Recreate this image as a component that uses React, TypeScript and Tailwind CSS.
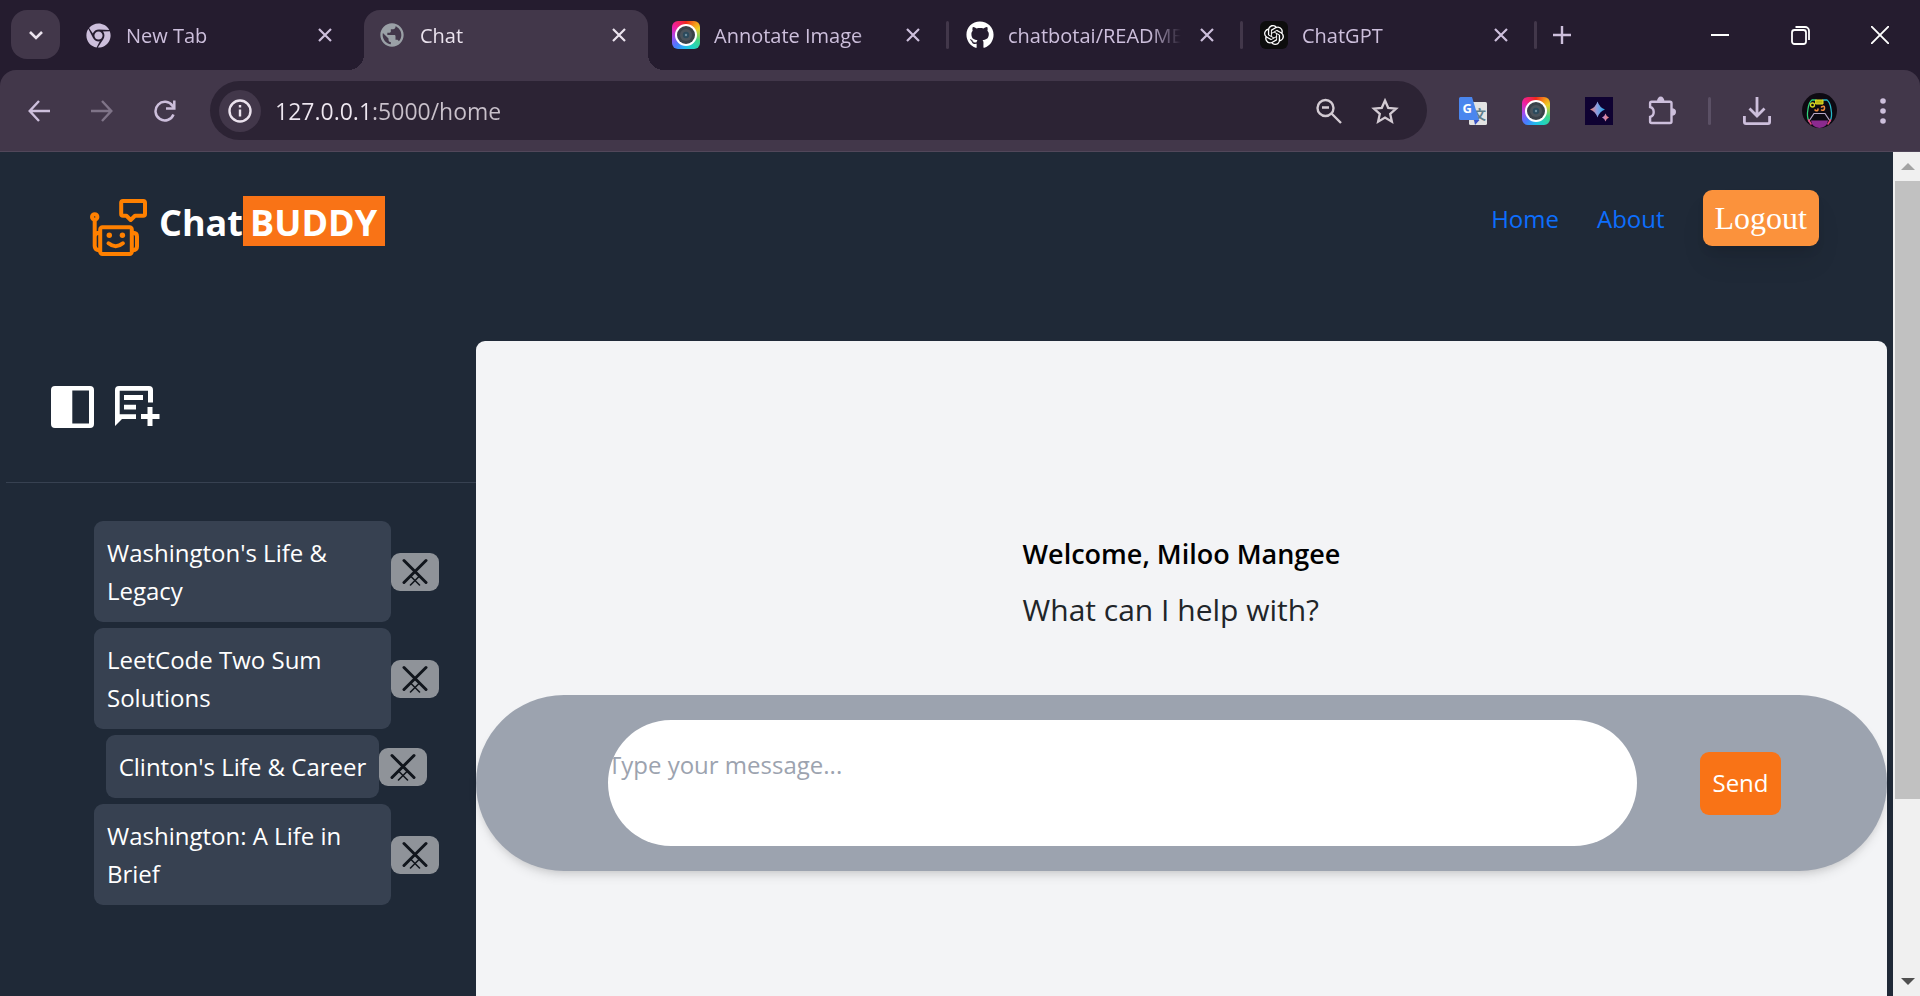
import React, { useState } from "react";
import { FaChrome, FaGithub } from "react-icons/fa";
import { MdPublic } from "react-icons/md";
import { SiOpenai } from "react-icons/si";

function CloseGlyph() {
  return (
    <svg viewBox="0 0 14 14" className="size-3.5" fill="none" stroke="currentColor" strokeWidth="2.2" aria-hidden="true">
      <path d="M1 1l12 12M13 1L1 13" />
    </svg>
  );
}

function CameraIcon() {
  return (
    <span className="flex size-7 items-center justify-center rounded-md bg-[conic-gradient(from_0deg,#f0281c,#f5a31a_12%,#e9d02a_18%,#3fd48a_32%,#1fd3c4_42%,#22b7f0_52%,#4a7bff_62%,#a04df0_72%,#f01fa0_85%,#f0281c)]">
      <span className="flex size-[22px] items-center justify-center rounded-full bg-white">
        <svg viewBox="0 0 18 18" className="size-[18px]" aria-hidden="true">
          <circle cx="9" cy="9" r="9" fill="#3a4249" />
          <circle cx="9" cy="9" r="6" fill="#4b545c" />
          <circle cx="9" cy="9" r="3.2" fill="#2b4a5c" />
          <circle cx="9" cy="9" r="1.2" fill="#6f8fa0" />
        </svg>
      </span>
    </span>
  );
}

type TabInfo = { title: string; icon: React.ReactNode; active?: boolean; divider?: boolean };

const tabs: TabInfo[] = [
  { title: "New Tab", icon: <FaChrome className="size-[25px] text-[#cdbfdc]" /> },
  { title: "Chat", icon: <MdPublic className="size-7 text-[#9aa0a6]" />, active: true },
  { title: "Annotate Image", icon: <CameraIcon />, divider: true },
  { title: "chatbotai/README.md", icon: <FaGithub className="size-7 text-white" />, divider: true },
  {
    title: "ChatGPT",
    icon: (
      <span className="flex size-7 items-center justify-center rounded-md bg-[#0d0d0d]">
        <SiOpenai className="size-5 text-white" />
      </span>
    ),
    divider: true,
  },
];

function BrowserTab({ title, icon, active, divider }: TabInfo) {
  return (
    <>
      <div
        className={
          active
            ? "relative flex h-[60px] w-[284px] min-w-0 items-center rounded-t-2xl bg-[#42374a] pb-2.5 pl-3.5 pr-[15px] text-[#ebe3ee] before:absolute before:bottom-0 before:right-full before:size-4 before:bg-[radial-gradient(circle_at_0_0,transparent_16px,#42374a_16px)] after:absolute after:bottom-0 after:left-full after:size-4 after:bg-[radial-gradient(circle_at_100%_0,transparent_16px,#42374a_16px)]"
            : "flex h-[60px] w-[284px] min-w-0 items-center pb-2.5 pl-3.5 pr-[15px] text-[#cdbfdc]"
        }
      >
        <span className="flex size-7 shrink-0 items-center justify-center">{icon}</span>
        <span className="ml-3.5 mr-3 min-w-0 flex-1 overflow-hidden whitespace-nowrap pt-0.5 text-xl leading-7 [mask-image:linear-gradient(to_right,black_82%,transparent)]">
          {title}
        </span>
        <button type="button" aria-label={`Close ${title}`} className="flex size-7 shrink-0 items-center justify-center">
          <CloseGlyph />
        </button>
      </div>
      <span className="flex h-[50px] w-2.5 items-center justify-center">
        {divider && <span className="h-7 w-[3px] rounded-full bg-[#42374a]" />}
      </span>
    </>
  );
}

function ToolButton({ label, children }: { label: string; children: React.ReactNode }) {
  return (
    <button type="button" aria-label={label} className="flex h-[59px] w-[63px] shrink-0 items-center justify-center text-[#cdbfdc]">
      {children}
    </button>
  );
}

function BrowserChrome() {
  return (
    <div className="bg-[#251c2f]">
      <div className="flex h-[70px] items-start pt-2.5">
        <button type="button" aria-label="Search tabs" className="ml-[11px] mr-2.5 flex h-[49px] w-[49px] items-center justify-center rounded-2xl bg-[#42374a] text-[#ebe3ee]">
          <svg viewBox="0 0 16 16" className="size-4" fill="none" stroke="currentColor" strokeWidth="2.6" aria-hidden="true">
            <path d="M2 5l6 6 6-6" />
          </svg>
        </button>
        {tabs.map((t) => (
          <BrowserTab key={t.title} {...t} />
        ))}
        <button type="button" aria-label="New tab" className="flex h-[50px] w-11 items-center justify-center text-[#cdbfdc]">
          <svg viewBox="0 0 18 18" className="size-[18px]" fill="none" stroke="currentColor" strokeWidth="2.4" aria-hidden="true">
            <path d="M9 0v18M0 9h18" />
          </svg>
        </button>
        <div className="ml-auto flex text-white">
          <button type="button" aria-label="Minimize" className="flex h-[50px] w-20 items-center justify-center">
            <svg viewBox="0 0 18 18" className="size-[18px]" stroke="currentColor" strokeWidth="2" aria-hidden="true">
              <path d="M0 9h18" />
            </svg>
          </button>
          <button type="button" aria-label="Restore" className="flex h-[50px] w-20 items-center justify-center">
            <svg viewBox="0 0 19 19" className="size-[19px]" fill="none" stroke="currentColor" strokeWidth="1.8" aria-hidden="true">
              <rect x="1" y="4" width="14" height="14" rx="2.5" />
              <path d="M4.500 1H14a4 4 0 0 1 4 4v9" />
            </svg>
          </button>
          <button type="button" aria-label="Close window" className="flex h-[50px] w-20 items-center justify-center">
            <svg viewBox="0 0 18 18" className="size-[18px]" stroke="currentColor" strokeWidth="1.9" aria-hidden="true">
              <path d="M0 0l18 18M18 0L0 18" />
            </svg>
          </button>
        </div>
      </div>

      <div className="flex items-center rounded-t-2xl border-b border-[#51475a] bg-[#42374a] pb-[11px] pl-[7px] pr-1.5 pt-[11px]">
        <ToolButton label="Back">
          <svg viewBox="0 0 22 22" className="size-[22px]" fill="none" stroke="currentColor" strokeWidth="2.4" aria-hidden="true">
            <path d="M22 11H2M11 1L1.700 11 11 21" />
          </svg>
        </ToolButton>
        <ToolButton label="Forward">
          <svg viewBox="0 0 22 22" className="size-[22px] text-[#7f7488]" fill="none" stroke="currentColor" strokeWidth="2.4" aria-hidden="true">
            <path d="M0 11h20M11 1l9.300 10L11 21" />
          </svg>
        </ToolButton>
        <ToolButton label="Reload">
          <svg viewBox="0 0 22 22" className="size-[22px]" fill="none" stroke="currentColor" strokeWidth="2.5" aria-hidden="true">
            <path d="M19.500 14.500A9.300 9.300 0 1 1 18.600 6L20 8" />
            <path d="M20.300 0.500v8h-8.300" />
          </svg>
        </ToolButton>
        <div className="ml-3.5 flex h-[59px] min-w-0 flex-1 items-center rounded-full bg-[#2c2334] pl-[9px] pr-3.5 text-[#d3cbd3]">
          <button type="button" aria-label="Site information" className="flex size-[42px] shrink-0 items-center justify-center rounded-full bg-[#42374a] text-[#ebe3ee]">
            <svg viewBox="0 0 24 24" className="size-6" fill="none" stroke="currentColor" strokeWidth="2.400" aria-hidden="true">
              <circle cx="12" cy="12" r="10.500" />
              <path d="M12 10.500v7M12 6v2.500" />
            </svg>
          </button>
          <input
            type="text"
            aria-label="Address"
            defaultValue="127.0.0.1:5000/home"
            className="ml-3.5 min-w-0 flex-1 bg-[linear-gradient(to_right,#eee7f0_97px,#c9c1cb_97px)] bg-clip-text text-[23px] leading-8 text-transparent outline-none"
          />
          <button type="button" aria-label="Zoom out" className="flex h-full w-14 items-center justify-center">
            <svg viewBox="0 0 26 26" className="size-[26px]" fill="none" stroke="currentColor" strokeWidth="2.400" aria-hidden="true">
              <circle cx="9.500" cy="10" r="8" />
              <path d="M15.500 15.500L25 25M6 9.500h7" />
            </svg>
          </button>
          <button type="button" aria-label="Bookmark this tab" className="flex h-full w-14 items-center justify-center">
            <svg viewBox="0 0 28 28" className="size-7" fill="none" stroke="currentColor" strokeWidth="2.300" aria-hidden="true">
              <path d="M14 3.500l3.200 7.300 7.900.8-5.900 5.300 1.700 7.800L14 20.600l-6.900 4.100 1.700-7.800-5.900-5.300 7.900-.8z" />
            </svg>
          </button>
        </div>
        <span className="w-3.5" />
        <ToolButton label="Translate">
          <svg viewBox="0 0 28 28" className="size-7" aria-hidden="true">
            <rect x="10" y="5" width="18" height="23" rx="1.500" fill="#e3e3e3" />
            <text x="14" y="21.500" fontSize="13" fontFamily="Noto Sans CJK SC, sans-serif" fontWeight="700" fill="#5d7d8b">文</text>
            <path d="M15 23h5.500L16 28z" fill="#3a53c5" />
            <path d="M1.500 0H13l7 23H1.500A1.500 1.500 0 0 1 0 21.500v-20A1.500 1.500 0 0 1 1.500 0z" fill="#4a86ee" />
            <text x="3.500" y="16" fontSize="13" fontFamily="Open Sans, sans-serif" fontWeight="700" fill="#fff">G</text>
          </svg>
        </ToolButton>
        <ToolButton label="Screenshot">
          <CameraIcon />
        </ToolButton>
        <ToolButton label="AI assistant">
          <svg viewBox="0 0 28 28" className="size-7" aria-hidden="true">
            <defs>
              <linearGradient id="spark" x1="0" y1="0" x2="1" y2="0">
                <stop offset="0" stopColor="#f5806e" />
                <stop offset="0.450" stopColor="#8f9be0" />
                <stop offset="1" stopColor="#1fa8e8" />
              </linearGradient>
              <linearGradient id="spark-small" x1="0" y1="0" x2="1" y2="0">
                <stop offset="0" stopColor="#b48ae0" />
                <stop offset="1" stopColor="#f5806e" />
              </linearGradient>
            </defs>
            <path d="M0 0h28v28H0z" fill="#0f0232" />
            <path d="M12.500 4.500q2 6 7.500 8-5.500 2-7.500 8-2-6-7.500-8 5.500-2 7.500-8z" fill="url(#spark)" />
            <path d="M20.500 16.500q.8 3 3.500 4-2.700 1-3.500 4-.8-3-3.500-4 2.700-1 3.500-4z" fill="url(#spark-small)" />
          </svg>
        </ToolButton>
        <ToolButton label="Extensions">
          <svg viewBox="0 0 28 29" className="h-[29px] w-7" fill="none" stroke="currentColor" strokeWidth="2.400" aria-hidden="true">
            <path d="M3.600 5.700H22a1.500 1.500 0 0 1 1.500 1.500v18.300a1.500 1.500 0 0 1-1.500 1.500H3.600a1.500 1.500 0 0 1-1.500-1.500V21q3.600-1 3.600-5t-3.600-5V7.200a1.500 1.500 0 0 1 1.500-1.500z" />
            <path d="M9 5.500a3.700 5 0 0 1 7.400 0zM23.700 12.300a4.300 3.700 0 0 1 0 7.400z" fill="currentColor" stroke="none" />
          </svg>
        </ToolButton>
        <span className="flex w-8 shrink-0 justify-center">
          <span className="h-7 w-[3px] rounded-full bg-[#5b5065]" />
        </span>
        <ToolButton label="Downloads">
          <svg viewBox="0 0 28 28" className="size-7" fill="none" stroke="currentColor" strokeWidth="2.800" aria-hidden="true">
            <path d="M14 0v18M6.500 11.500L14 19l7.500-7.500M1.400 19v6q0 1.600 1.600 1.600h22q1.600 0 1.600-1.600v-6" />
          </svg>
        </ToolButton>
        <ToolButton label="Profile">
          <svg viewBox="0 0 35 35" className="size-[35px]" fill="none" strokeLinecap="round" aria-hidden="true">
            <circle cx="17.500" cy="17.500" r="17.500" fill="#0d0a12" />
            <path d="M7 28q-2.500-4-1-12 1-7 4-9h4" stroke="#2fd07a" strokeWidth="1.300" />
            <path d="M21 7h4q3 2 4 9 1.500 8-1 12" stroke="#27b8c9" strokeWidth="1.300" />
            <path d="M14 7h7v4h-7z" fill="#b9b512" stroke="#e8e021" strokeWidth="1" />
            <circle cx="10.500" cy="12" r="2" stroke="#d8d824" strokeWidth="1.300" />
            <path d="M13 17q3 2 3-1M19.500 14q3-2 3 1t-3 2" stroke="#f08a3c" strokeWidth="1.600" />
            <path d="M7 28l5-7.500h11l5 7.500" stroke="#b9a8c6" strokeWidth="1.200" />
            <path d="M9 27.500h17q-1 7-8.500 7.500Q10 34.500 9 27.500z" fill="#8b2a8f" />
            <path d="M6.500 27l2.500 4M28.500 27L26 31" stroke="#e0467c" strokeWidth="1.600" />
          </svg>
        </ToolButton>
        <ToolButton label="Browser menu">
          <svg viewBox="0 0 6 26" className="h-[26px] w-1.5" fill="currentColor" aria-hidden="true">
            <circle cx="3" cy="3" r="2.800" />
            <circle cx="3" cy="13" r="2.800" />
            <circle cx="3" cy="23" r="2.800" />
          </svg>
        </ToolButton>
      </div>
    </div>
  );
}

function RobotLogo() {
  return (
    <svg viewBox="0 0 57 57" className="mt-[3px] size-[57px]" fill="none" stroke="#ff8000" strokeWidth="4" strokeLinecap="round" strokeLinejoin="round" aria-hidden="true">
      <rect x="10.200" y="28.200" width="31.600" height="26.800" rx="2.200" />
      <circle cx="4.700" cy="17.900" r="2.700" />
      <path d="M4.700 21.500V47q0 3.500 4 4.200M9 33.800q-4 .5-4.300 3.500" />
      <path d="M43 33.800q4 .2 4 3.700v10q0 3.400-4 3.700" />
      <path d="M18.500 44.300q7.200 6 14.400 0" />
      <circle cx="19.300" cy="36.300" r="2.700" fill="#ff8000" stroke="none" />
      <circle cx="32.400" cy="36.300" r="2.700" fill="#ff8000" stroke="none" />
      <path d="M33 2h20.200q1.800 0 1.800 1.800V15q0 1.800-1.800 1.800H45l-4.300 4.200-4.300-4.200H33q-1.800 0-1.800-1.800V3.800Q31.200 2 33 2z" />
    </svg>
  );
}

function PageHeader() {
  return (
    <header className="flex items-start justify-between pb-[85px] pl-[90px] pr-[74px] pt-[38px]">
      <div className="mt-1.5 flex items-start">
        <RobotLogo />
        <h1 className="ml-3 flex text-4xl font-bold leading-[46px] text-white">
          <span className="pt-1">Chat</span>
          <span className="bg-[#f97316] pl-[7px] pr-2 pt-1">BUDDY</span>
        </h1>
      </div>
      <nav className="flex items-center gap-[38px] text-2xl leading-9 text-[#0d6efd]">
        <a href="#home" className="pt-0.5">Home</a>
        <a href="#about" className="pt-0.5">About</a>
        <button type="button" className="h-14 rounded-[9px] bg-[#fb923c] px-3 font-['Liberation_Serif',serif] text-[32px] leading-10 text-white shadow-[0_18px_28px_-5px_rgba(0,0,0,0.1),0_7px_11px_-4px_rgba(0,0,0,0.1)]">
          Logout
        </button>
      </nav>
    </header>
  );
}

const chats = ["Washington's Life & Legacy", "LeetCode Two Sum Solutions", "Clinton's Life & Career", "Washington: A Life in Brief"];

function Sidebar() {
  return (
    <aside className="w-[470px] shrink-0">
      <div className="flex gap-[21px] border-b border-[#374151] pb-[54px] pl-[45px] pt-[45px] text-white">
        <button type="button" aria-label="Toggle sidebar">
          <svg viewBox="0 0 43 42" className="h-[42px] w-[43px]" fill="currentColor" aria-hidden="true">
            <path fillRule="evenodd" d="M4 0h35a4 4 0 0 1 4 4v34a4 4 0 0 1-4 4H4a4 4 0 0 1-4-4V4a4 4 0 0 1 4-4zM21.300 4.500v33H38v-33z" />
          </svg>
        </button>
        <button type="button" aria-label="New chat">
          <svg viewBox="0 0 45 42" className="h-[42px] w-[45px]" fill="currentColor" aria-hidden="true">
            <path d="M4 0h30q4 0 4 4v12.500h-5V4.700H4.700v23.500H21V33H7l-7 7V4q0-4 4-4z" />
            <path d="M9 9h19v5H9zM9 18.700h12v4.800H9zM32.500 21h5v7h7v5h-7v7h-5v-7H26v-5h6.500z" />
          </svg>
        </button>
      </div>
      <ul className="flex flex-col gap-1.5 pl-[88px] pr-[37px] pt-[38px]">
        {chats.map((c) => (
          <li key={c} className="flex items-center justify-center">
            <button type="button" className="rounded-[9px] bg-[#374151] px-[13px] pb-3 pt-[13px] text-left text-2xl leading-[38px] text-white">
              {c}
            </button>
            <button type="button" aria-label={`Delete ${c}`} className="flex h-[38px] w-12 shrink-0 items-center justify-center rounded-[9px] bg-[#8f9399] text-[#11151c]">
              <svg viewBox="0 0 26 28" className="h-7 w-[26px]" fill="none" stroke="currentColor" strokeLinecap="round" aria-hidden="true">
                <path d="M2 2.500L24 24.500M24 2.500L2 24.500" strokeWidth="3" />
                <path d="M9 18.500l8.500 8.500M17 18.500L8.500 27" strokeWidth="1.600" />
              </svg>
            </button>
          </li>
        ))}
      </ul>
    </aside>
  );
}

function ChatPanel() {
  const [message, setMessage] = useState("");
  return (
    <main className="flex min-w-0 flex-1 flex-col items-center rounded-t-[9px] bg-[#f3f4f6] pt-[195px]">
      <div className="flex flex-col gap-[18px]">
        <h2 className="text-[27px] font-semibold leading-9 text-black">Welcome, Miloo Mangee</h2>
        <p className="text-3xl leading-10 text-[#212529]">What can I help with?</p>
      </div>
      <form
        onSubmit={(e) => e.preventDefault()}
        className="mt-[65px] flex w-full items-center gap-[63px] rounded-full bg-[#9ca3af] py-[25px] pl-[132px] pr-[106px] shadow-[0_7px_11px_-2px_rgba(0,0,0,0.1),0_4px_7px_-3px_rgba(0,0,0,0.1)]"
      >
        <textarea
          aria-label="Message"
          placeholder="Type your message..."
          value={message}
          onChange={(e) => setMessage(e.target.value)}
          className="h-[126px] min-w-0 flex-1 resize-none overflow-hidden rounded-full bg-white pt-[27px] text-2xl leading-9 text-[#212529] outline-none placeholder:text-[#9ca3af]"
        />
        <button type="submit" className="h-[63px] w-[81px] shrink-0 rounded-[9px] bg-[#f97316] text-2xl leading-9 text-white">
          Send
        </button>
      </form>
    </main>
  );
}

function Scrollbar() {
  return (
    <div className="flex w-[27px] shrink-0 flex-col items-end bg-[#f0f0f0]" aria-hidden="true">
      <span className="flex h-[29px] w-[25px] items-center justify-center">
        <span className="border-x-[7px] border-b-[7px] border-x-transparent border-b-[#a3a3a3]" />
      </span>
      <span className="w-[25px] flex-[618] bg-[#c1c1c1]" />
      <span className="flex-[168]" />
      <span className="flex h-[29px] w-[25px] items-center justify-center">
        <span className="border-x-[7px] border-t-[7px] border-x-transparent border-t-[#505050]" />
      </span>
    </div>
  );
}

export default function App() {
  return (
    <div className="flex h-screen flex-col overflow-hidden font-['Open_Sans','Noto_Sans',sans-serif]">
      <BrowserChrome />
      <div className="flex min-h-0 flex-1">
        <div className="flex min-w-0 flex-1 flex-col overflow-hidden bg-[#1f2937]">
          <PageHeader />
          <div className="flex flex-1 px-1.5">
            <Sidebar />
            <ChatPanel />
          </div>
        </div>
        <Scrollbar />
      </div>
    </div>
  );
}
